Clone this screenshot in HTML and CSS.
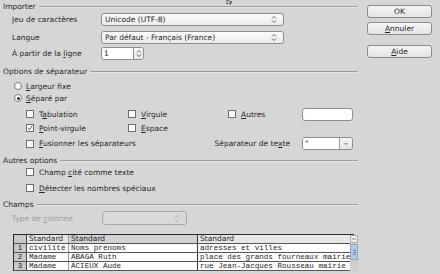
FILE: index.html
```html
<!DOCTYPE html>
<html lang="fr">
<head>
  <meta charset="UTF-8">
  <title>Import de texte</title>
  <link rel="stylesheet" href="styles.css">
</head>
<body>
  <div class="dialog">
    <div class="main">
      <!-- Importer -->
      <div class="legend"><span>Importer</span><i class="rule"></i></div>
      <div class="field-row first">
        <label class="field-label"><u>J</u>eu de caractères</label>
        <div class="combo wide"><span>Unicode (UTF-8)</span>
          <svg class="updown" viewBox="0 0 6 9"><path d="M1 3.5 L3 1.5 L5 3.5 M1 5.5 L3 7.5 L5 5.5"/></svg>
        </div>
      </div>
      <div class="field-row second">
        <label class="field-label">Langue</label>
        <div class="combo wide"><span>Par défaut - Français (France)</span>
          <svg class="updown" viewBox="0 0 6 9"><path d="M1 3.5 L3 1.5 L5 3.5 M1 5.5 L3 7.5 L5 5.5"/></svg>
        </div>
      </div>
      <div class="field-row third">
        <label class="field-label">À partir de la <u>l</u>igne</label>
        <div class="spin"><span class="spin-value">1</span>
          <span class="spin-btn"><svg class="updown" viewBox="0 0 6 9"><path d="M1 3.5 L3 1.5 L5 3.5 M1 5.5 L3 7.5 L5 5.5"/></svg></span>
        </div>
      </div>

      <!-- Options de séparateur -->
      <div class="legend sep-legend"><span>Options de séparateur</span><i class="rule"></i></div>
      <div class="radio-row r1"><span class="radio"></span><span><u>L</u>argeur fixe</span></div>
      <div class="radio-row"><span class="radio on"></span><span><u>S</u>éparé par</span></div>

      <div class="check-grid">
        <div class="check"><span class="box"></span><span>T<u>a</u>bulation</span></div>
        <div class="check"><span class="box"></span><span><u>V</u>irgule</span></div>
        <div class="check"><span class="box"></span><span><u>A</u>utres</span></div>
        <div class="text-input"></div>

        <div class="check"><span class="box checked"><svg viewBox="0 0 7 7"><path d="M1 3.5 L3 5.5 L6 1"/></svg></span><span><u>P</u>oint-virgule</span></div>
        <div class="check"><span class="box"></span><span><u>E</u>space</span></div>
        <div></div>
        <div></div>

        <div class="check span2"><span class="box"></span><span><u>F</u>usionner les séparateurs</span></div>
        <div class="quote-label">Séparateur de te<u>x</u>te</div>
        <div class="quote-combo"><span class="quote-value">"</span>
          <span class="drop-btn"><svg viewBox="0 0 6 6"><path d="M1.5 2 L3 3.5 L4.5 2"/></svg></span>
        </div>
      </div>

      <!-- Autres options -->
      <div class="legend other-legend"><span>Autres options</span><i class="rule"></i></div>
      <div class="check single"><span class="box"></span><span>Champ <u>c</u>ité comme texte</span></div>
      <div class="check single second-check"><span class="box"></span><span><u>D</u>étecter les nombres spéciaux</span></div>

      <!-- Champs -->
      <div class="legend fields-legend"><span>Champs</span><i class="rule"></i></div>
      <div class="field-row type-row">
        <label class="field-label disabled">Type de <u>c</u>olonne</label>
        <div class="combo narrow disabled">
          <svg class="updown" viewBox="0 0 6 9"><path d="M1 3.5 L3 1.5 L5 3.5 M1 5.5 L3 7.5 L5 5.5"/></svg>
        </div>
      </div>

      <div class="preview">
        <div class="grid">
          <div class="row head">
            <span class="num"></span>
            <span class="cell c1">Standard</span>
            <span class="cell c2 sel">Standard</span>
            <span class="cell c3">Standard</span>
          </div>
          <div class="row">
            <span class="num">1</span>
            <span class="cell c1 mono">civilité</span>
            <span class="cell c2 mono">Noms prénoms</span>
            <span class="cell c3 mono">adresses et villes</span>
          </div>
          <div class="row">
            <span class="num">2</span>
            <span class="cell c1 mono">Madame</span>
            <span class="cell c2 mono">ABAGA Ruth</span>
            <span class="cell c3 mono">place des grands fourneaux mairie</span>
          </div>
          <div class="row">
            <span class="num">3</span>
            <span class="cell c1 mono">Madame</span>
            <span class="cell c2 mono">ACIEUX Aude</span>
            <span class="cell c3 mono">rue Jean-Jacques Rousseau mairie</span>
          </div>
        </div>
        <div class="scrollbar">
          <span class="arrow"><svg viewBox="0 0 7 7"><path d="M1.5 4.5 L3.5 2.5 L5.5 4.5"/></svg></span>
          <span class="thumb"><i></i><i></i><i></i></span>
        </div>
      </div>
    </div>

    <div class="buttons">
      <button class="btn ok">OK</button>
      <button class="btn"><u>A</u>nnuler</button>
      <button class="btn help"><u>A</u>ide</button>
    </div>
  </div>

  <!-- pointeur de souris -->
  <svg class="pointer" viewBox="0 0 8 5"><path d="M1 0 L1 4 L2.5 2.8 L4 4.5 L5 4 L3.8 2.4 L6 2.2 Z"/></svg>
</body>
</html>
```

FILE: styles.css
```css
body {
  margin: 0;
  width: 440px;
  height: 274px;
  overflow: hidden;
  background-color: #d6d6d6;
  font-family: "DejaVu Sans", sans-serif;
  font-size: 7.5px;
  color: #262626;
  position: relative;
}
u {
  text-decoration-thickness: 1px;
  text-underline-offset: 1px;
}
.dialog {
  display: flex;
}
.main {
  width: 355px;
  margin-left: 3px;
}
.legend {
  height: 12px;
  display: flex;
  align-items: center;
  gap: 3px;
}
.legend .rule {
  flex: 1;
  border-top: 1px solid #9b9b9b;
  border-bottom: 1px solid #e6e6e6;
  margin-top: 1px;
}
.field-row {
  display: flex;
  align-items: center;
  height: 14px;
  padding-left: 9px;
}
.field-row.second {
  margin-top: 4px;
}
.field-row.third {
  margin-top: 2px;
  height: 15px;
}
.field-label {
  width: 89px;
}
.field-label.disabled {
  color: #9c9c9c;
}
.combo {
  height: 11px;
  border: 1px solid #8e8e8e;
  border-radius: 3px;
  background: linear-gradient(#fbfbfb, #ececec);
  display: flex;
  align-items: center;
  padding-left: 3px;
  box-sizing: content-box;
}
.combo span {
  flex: 1;
}
.combo.wide {
  width: 178px;
}
.combo.narrow {
  width: 80px;
  margin-left: 1px;
  height: 12px;
  justify-content: flex-end;
  border-color: #a8a8a8;
  background: #d9d9d9;
}
.updown {
  width: 6px;
  height: 9px;
  margin-right: 6px;
  fill: none;
  stroke: #555;
  stroke-width: 0.9;
}
.combo.disabled .updown {
  stroke: #a0a0a0;
}
.spin {
  display: flex;
  width: 41px;
  height: 11px;
  border: 1px solid #8e8e8e;
  border-radius: 3px;
  overflow: hidden;
}
.spin-value {
  flex: 1;
  background: #fff;
  padding-left: 2px;
  line-height: 11px;
}
.spin-btn {
  width: 9px;
  border-left: 1px solid #8e8e8e;
  background: linear-gradient(#f8f8f8, #e6e6e6);
  display: flex;
  align-items: center;
  justify-content: center;
}
.spin-btn .updown {
  margin: 0;
}
.sep-legend {
  margin-top: 4px;
}
.radio-row {
  display: flex;
  align-items: center;
  gap: 4px;
  height: 12px;
  padding-left: 11px;
}
.radio-row.r1 {
  margin-top: 3px;
}
.radio {
  width: 6px;
  height: 6px;
  border: 1px solid #7a7a7a;
  border-radius: 50%;
  background: #fff;
  position: relative;
}
.radio.on::after {
  content: "";
  position: absolute;
  left: 1.5px;
  top: 1.5px;
  width: 3px;
  height: 3px;
  border-radius: 50%;
  background: #333;
}
.check-grid {
  display: grid;
  grid-template-columns: 102px 100px 74px 51px;
  grid-template-rows: 14px 14px 14px;
  row-gap: 0;
  padding-left: 23px;
  margin-top: 3px;
}
.check-grid > :nth-child(n+9) {
  margin-top: 3px;
}
.check {
  display: flex;
  align-items: center;
  gap: 5px;
  white-space: nowrap;
}
.span2 {
  grid-column: span 2;
}
.box {
  width: 6px;
  height: 6px;
  border: 1px solid #6e6e6e;
  background: #fff;
  display: flex;
}
.box svg {
  width: 6px;
  height: 6px;
  fill: none;
  stroke: #333;
  stroke-width: 1;
}
.text-input {
  height: 11px;
  align-self: center;
  border: 1px solid #8e8e8e;
  border-radius: 3px;
  background: #fff;
}
.quote-label {
  align-self: center;
  justify-self: end;
  margin-right: 12px;
  white-space: nowrap;
}
.quote-combo {
  height: 11px;
  align-self: center;
  display: flex;
  border: 1px solid #8e8e8e;
  border-radius: 3px;
  overflow: hidden;
}
.quote-value {
  flex: 1;
  background: #fff;
  padding-left: 2px;
  line-height: 11px;
}
.drop-btn {
  width: 12px;
  border-left: 1px solid #9a9a9a;
  background: linear-gradient(#f6f6f6, #e4e4e4);
  display: flex;
  align-items: center;
  justify-content: center;
}
.drop-btn svg {
  width: 6px;
  height: 6px;
  fill: none;
  stroke: #555;
  stroke-width: 0.9;
}
.other-legend {
  margin-top: 5px;
}
.check.single {
  height: 12px;
  padding-left: 23px;
}
.check.second-check {
  margin-top: 4px;
}
.fields-legend {
  margin-top: 4px;
}
.type-row {
  margin-top: 1px;
}
.preview {
  display: flex;
  margin-top: 9px;
  margin-left: 10px;
  width: 340px;
  border-top: 1px solid #2a2a2a;
  border-left: 1px solid #2a2a2a;
}
.grid {
  flex: 1;
  font-size: 7.5px;
}
.row {
  display: flex;
  height: 8px;
  border-bottom: 1px solid #555;
  line-height: 8px;
}
.num {
  width: 12px;
  background: #c9c9c9;
  border-right: 1px solid #444;
  text-align: center;
  font-family: "Liberation Mono", monospace;
}
.cell {
  background: #fff;
  padding-left: 2px;
  overflow: hidden;
  white-space: nowrap;
}
.head .cell {
  background: #e6e6e6;
}
.head .cell.sel {
  background: #d2d2d2;
}
.head .num {
  background: #c9c9c9;
}
.c1 {
  width: 39px;
}
.c2 {
  width: 126px;
  border-left: 1px solid #9a9a9a;
}
.c3 {
  flex: 1;
  border-left: 1px solid #333;
}
.mono {
  font-family: "Liberation Mono", monospace;
  font-size: 7.6px;
}
.scrollbar {
  width: 8px;
  background: #cfcfcf;
  display: flex;
  flex-direction: column;
}
.arrow {
  height: 8px;
  border: 1px solid #a8a8a8;
  border-radius: 2px;
  background: #f0f0f0;
  box-sizing: border-box;
  display: flex;
}
.arrow svg {
  width: 6px;
  height: 6px;
  fill: none;
  stroke: #555;
  stroke-width: 0.9;
}
.thumb {
  height: 16px;
  margin-top: 1px;
  background: #b3c6e2;
  border: 1px solid #8fa6c8;
  box-sizing: border-box;
  display: flex;
  flex-direction: column;
  align-items: center;
  justify-content: center;
  gap: 1px;
}
.thumb i {
  width: 3px;
  height: 1px;
  background: #6f86aa;
}
.buttons {
  margin-left: 9px;
  width: 65px;
  padding-top: 5px;
  display: flex;
  flex-direction: column;
}
.btn {
  height: 13px;
  padding: 0;
  font-family: "DejaVu Sans", sans-serif;
  font-size: 7.5px;
  color: #262626;
  border: 1px solid #8c8c8c;
  border-radius: 3px;
  background: linear-gradient(#f6f6f6, #e3e3e3);
  margin-bottom: 4px;
}
.btn.help {
  margin-top: 6px;
}
.pointer {
  position: absolute;
  left: 226px;
  top: 0;
  width: 8px;
  height: 5px;
  fill: #fff;
  stroke: #222;
  stroke-width: 0.7;
}
```
